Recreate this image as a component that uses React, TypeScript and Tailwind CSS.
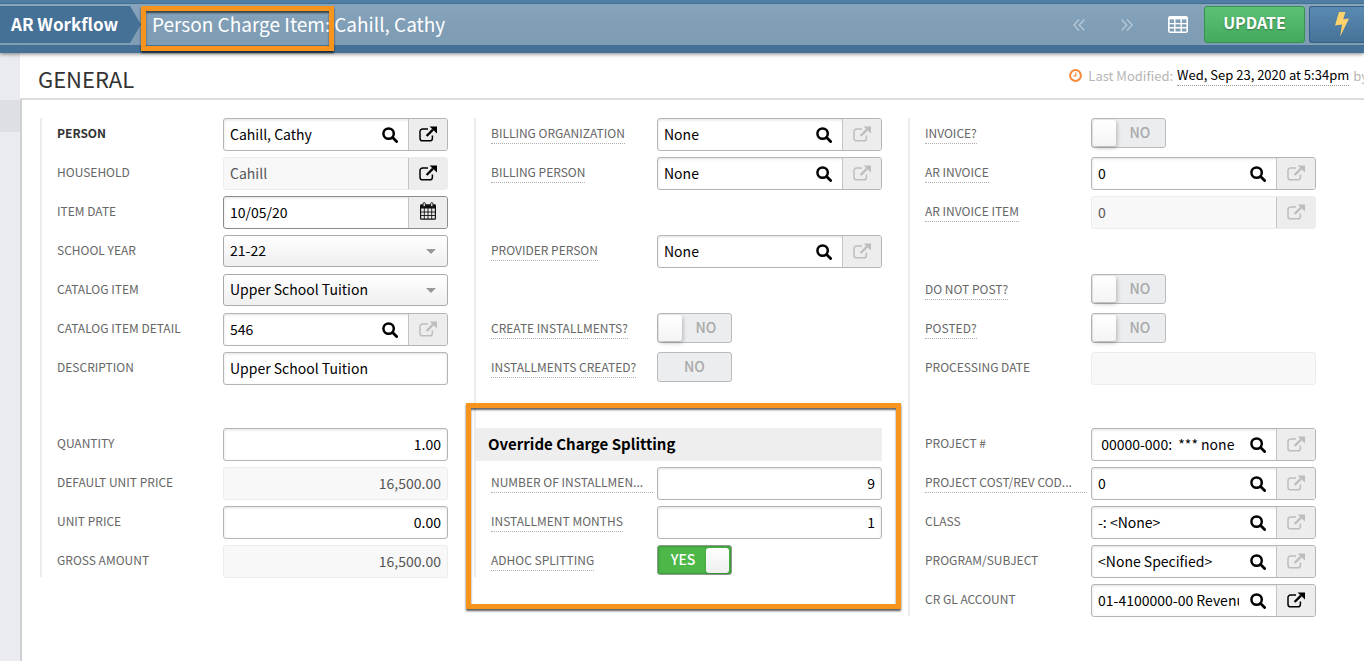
import React, { useState } from 'react';

type FieldKind = 'lookup' | 'linked' | 'date' | 'select' | 'text' | 'number' | 'toggle' | 'flag' | 'spacer' | 'gap';

interface Field {
  id: string;
  kind: FieldKind;
  label?: string;
  value?: string;
  bold?: boolean;
  hint?: boolean; // dotted underline, help text available
  clipped?: boolean; // shortened label, takes the full label column
  readOnly?: boolean;
  linkActive?: boolean;
  on?: boolean;
}

const itemFields: Field[] = [
  { id: 'person', kind: 'lookup', label: 'PERSON', value: 'Cahill, Cathy', bold: true, linkActive: true },
  { id: 'household', kind: 'linked', label: 'HOUSEHOLD', value: 'Cahill', readOnly: true, linkActive: true },
  { id: 'item-date', kind: 'date', label: 'ITEM DATE', value: '10/05/20' },
  { id: 'school-year', kind: 'select', label: 'SCHOOL YEAR', value: '21-22' },
  { id: 'catalog-item', kind: 'select', label: 'CATALOG ITEM', value: 'Upper School Tuition' },
  { id: 'catalog-detail', kind: 'lookup', label: 'CATALOG ITEM DETAIL', value: '546' },
  { id: 'description', kind: 'text', label: 'DESCRIPTION', value: 'Upper School Tuition' },
  { id: 'item-gap', kind: 'gap' },
  { id: 'quantity', kind: 'number', label: 'QUANTITY', value: '1.00' },
  { id: 'default-price', kind: 'number', label: 'DEFAULT UNIT PRICE', value: '16,500.00', readOnly: true },
  { id: 'unit-price', kind: 'number', label: 'UNIT PRICE', value: '0.00' },
  { id: 'gross', kind: 'number', label: 'GROSS AMOUNT', value: '16,500.00', readOnly: true },
];

const billingFields: Field[] = [
  { id: 'billing-org', kind: 'lookup', label: 'BILLING ORGANIZATION', value: 'None', hint: true },
  { id: 'billing-person', kind: 'lookup', label: 'BILLING PERSON', value: 'None', hint: true },
  { id: 'billing-spacer-1', kind: 'spacer' },
  { id: 'provider', kind: 'lookup', label: 'PROVIDER PERSON', value: 'None', hint: true },
  { id: 'billing-spacer-2', kind: 'spacer' },
  { id: 'create-inst', kind: 'toggle', label: 'CREATE INSTALLMENTS?', hint: true },
  { id: 'inst-created', kind: 'flag', label: 'INSTALLMENTS CREATED?', hint: true },
  { id: 'billing-gap', kind: 'gap' },
];

const splittingFields: Field[] = [
  { id: 'num-inst', kind: 'number', label: 'NUMBER OF INSTALLMEN...', value: '9', hint: true, clipped: true },
  { id: 'inst-months', kind: 'number', label: 'INSTALLMENT MONTHS', value: '1', hint: true },
  { id: 'adhoc', kind: 'toggle', label: 'ADHOC SPLITTING', on: true, hint: true },
];

const invoiceFields: Field[] = [
  { id: 'invoice', kind: 'toggle', label: 'INVOICE?', hint: true },
  { id: 'ar-invoice', kind: 'lookup', label: 'AR INVOICE', value: '0', hint: true },
  { id: 'ar-invoice-item', kind: 'linked', label: 'AR INVOICE ITEM', value: '0', hint: true, readOnly: true },
  { id: 'invoice-spacer', kind: 'spacer' },
  { id: 'do-not-post', kind: 'toggle', label: 'DO NOT POST?', hint: true },
  { id: 'posted', kind: 'toggle', label: 'POSTED?', hint: true },
  { id: 'processing-date', kind: 'text', label: 'PROCESSING DATE', value: '', readOnly: true },
  { id: 'invoice-gap', kind: 'gap' },
  { id: 'project', kind: 'lookup', label: 'PROJECT #', value: ' 00000-000:  *** none' },
  { id: 'cost-code', kind: 'lookup', label: 'PROJECT COST/REV COD...', value: '0', hint: true, clipped: true },
  { id: 'class', kind: 'lookup', label: 'CLASS', value: '-: <None>' },
  { id: 'program', kind: 'lookup', label: 'PROGRAM/SUBJECT', value: '<None Specified>' },
  { id: 'gl-account', kind: 'lookup', label: 'CR GL ACCOUNT', value: '01-4100000-00 Revenue', linkActive: true },
];

function SearchIcon() {
  return (
    <svg className="h-4 w-4" viewBox="0 0 16 16" fill="none" stroke="#000">
      <circle cx="6.6" cy="6.6" r="5.2" strokeWidth="2.5" />
      <path d="M10.6 10.6 14.6 14.6" strokeWidth="2.8" strokeLinecap="round" />
    </svg>
  );
}

function ExternalIcon() {
  return (
    <svg className="h-4 w-[18px]" viewBox="0 0 18 16" fill="none" stroke="currentColor">
      <path d="M9 3H3.6A2.6 2.6 0 0 0 1 5.6v6.6a2.6 2.6 0 0 0 2.6 2.6h7.2a2.6 2.6 0 0 0 2.6-2.6V9.6" strokeWidth="1.5" />
      <path d="M7.6 10 14 3.6" strokeWidth="2.3" />
      <path d="M10.6 0.4H18V7.6Z" fill="currentColor" stroke="none" />
    </svg>
  );
}

function CalendarIcon() {
  return (
    <svg className="h-[18px] w-4" viewBox="0 0 16 18" fill="none" stroke="#111">
      <rect x="0.6" y="3" width="14.8" height="14.2" rx="0.8" strokeWidth="1.2" />
      <path d="M0.6 2.6h14.8v4H0.6z" fill="#111" stroke="none" />
      <path d="M4.3 6v11M8 6v11M11.7 6v11M1 10h14M1 13.5h14" strokeWidth="0.9" />
      <rect x="3.1" y="0.6" width="2.2" height="4" rx="1" fill="#ececec" strokeWidth="0.9" />
      <rect x="10.7" y="0.6" width="2.2" height="4" rx="1" fill="#ececec" strokeWidth="0.9" />
    </svg>
  );
}

function Toggle({ field }: { field: Field }) {
  const [on, setOn] = useState(!!field.on);
  return (
    <label
      className={`relative flex h-[30px] w-[75px] items-center rounded-[3px] border text-sm leading-5 font-medium ${
        on
          ? 'border-[#8f9a8f] bg-[#4db748] text-white shadow-[inset_0_0_2px_1px_#3c9a3a]'
          : 'border-[#b9babb] bg-[#ecedef] text-[#a9a9a9]'
      }`}
    >
      <input
        id={field.id}
        type="checkbox"
        className="sr-only"
        checked={on}
        onChange={(e) => setOn(e.target.checked)}
      />
      {on ? (
        <>
          <span className="w-12 pb-0.5 pl-0.5 text-center">YES</span>
          <span className="h-[25px] w-[23px] rounded-[3px] bg-linear-to-b from-white to-[#efefef] shadow-sm" />
        </>
      ) : (
        <>
          <span className="ml-px h-[26px] w-[23px] rounded-[3px] bg-linear-to-b from-white to-[#f4f4f4] shadow-[1px_2px_4px_rgba(0,0,0,0.25)]" />
          <span className="w-12 pb-0.5 text-center">NO</span>
        </>
      )}
    </label>
  );
}

function Control({ field }: { field: Field }) {
  const [value, setValue] = useState(field.value ?? '');
  const { id, kind, readOnly } = field;

  if (kind === 'toggle') return <Toggle field={field} />;

  if (kind === 'flag') {
    return (
      <output
        id={id}
        className="flex h-[30px] w-[75px] items-center justify-center rounded-[3px] border border-[#b9babb] bg-[#ecedef] pb-0.5 text-sm leading-5 font-medium text-[#a9a9a9]"
      >
        NO
      </output>
    );
  }

  if (kind === 'select') {
    return (
      <div className="relative">
        <select
          id={id}
          defaultValue={value}
          className="h-8 w-full appearance-none rounded-[3px] border border-[#aaa] bg-linear-to-b from-white to-[#efefef] px-1.5 pb-0.5 text-sm leading-5 text-black"
        >
          <option>{value}</option>
        </select>
        <svg className="pointer-events-none absolute top-3.5 right-3 h-[5px] w-2.5" viewBox="0 0 10 5">
          <path d="M0 0h10L5 5z" fill="#999" />
        </svg>
      </div>
    );
  }

  const border = readOnly
    ? 'border-[#ececec] bg-[#f8f8f8]'
    : kind === 'date'
      ? 'border-[#8c8c8c] bg-white shadow-[inset_0_1px_3px_rgba(0,0,0,0.12)]'
      : 'border-[#b5b5b5] bg-white shadow-[inset_0_1px_3px_rgba(0,0,0,0.12)]';

  return (
    <div className={`flex h-[33px] overflow-hidden rounded-[3px] border ${border}`}>
      <input
        id={id}
        type="text"
        value={value}
        readOnly={readOnly}
        onChange={(e) => setValue(e.target.value)}
        className={`min-w-0 flex-1 bg-transparent pb-0.5 pl-1.5 text-sm leading-5 outline-none ${
          readOnly ? 'text-[#555]' : 'text-black'
        } ${kind === 'number' ? 'pr-1.5 text-right' : ''}`}
      />
      {kind === 'lookup' && (
        <button type="button" aria-label="Search" className="flex w-[37px] items-center justify-center">
          <SearchIcon />
        </button>
      )}
      {(kind === 'lookup' || kind === 'linked') && (
        <button
          type="button"
          aria-label="Open record"
          className={`flex w-[39px] items-center justify-center border-l border-[#c4c4c4] bg-[#ededed] pb-0.5 ${
            field.linkActive ? 'text-black' : 'text-[#bdbdbd]'
          }`}
        >
          <ExternalIcon />
        </button>
      )}
      {kind === 'date' && (
        <button
          type="button"
          aria-label="Pick date"
          className="flex w-[39px] items-center justify-center border-l border-[#c4c4c4] bg-[#ededed] pb-1"
        >
          <CalendarIcon />
        </button>
      )}
    </div>
  );
}

function FieldRow({ field }: { field: Field }) {
  if (field.kind === 'gap') return <div className="h-[37px]" />;
  if (field.kind === 'spacer') return <div className="h-[39px]" />;

  return (
    <div className="flex h-[39px] items-start pl-[15px] last:h-8">
      <div className="flex w-[166px] shrink-0 pt-[5px] pr-1">
        <label
          htmlFor={field.id}
          className={`text-xs leading-5 whitespace-nowrap ${
            field.bold ? 'font-bold text-[#333]' : 'text-[#666]'
          } ${field.hint ? 'border-b border-dotted border-[#b0b0b0]' : ''} ${field.clipped ? 'w-full' : ''}`}
        >
          {field.label}
        </label>
      </div>
      <div className="min-w-0 flex-1">
        <Control field={field} />
      </div>
    </div>
  );
}

function Column({ fields, children }: { fields: Field[]; children?: React.ReactNode }) {
  return (
    <div className="self-start border-l-2 border-[#ececec] pr-[26px]">
      {fields.map((field) => (
        <FieldRow key={field.id} field={field} />
      ))}
      {children}
    </div>
  );
}

const outline =
  'pointer-events-none absolute border-5 border-[#f7941d] shadow-[0_2px_2px_rgba(0,0,0,0.65),inset_0_2px_2px_rgba(0,0,0,0.6)]';

function Header() {
  return (
    <header className="relative z-10 border-t-3 border-b-8 border-t-[#4f7da3] border-b-[#467196] shadow-[0_1px_4px_rgba(0,0,0,0.5)]">
      <div className="flex h-[42px] items-center border-t border-[#44708f] bg-linear-to-b from-[#86a5bc] to-[#7f9db5] to-60%">
        <nav className="flex min-w-0 flex-1 items-center text-white">
          <a
            href="#workflow"
            className="flex h-[37px] w-[141px] shrink-0 items-center bg-[#467196] pb-0.5 pl-[11px] text-[17px] leading-6 font-bold whitespace-nowrap [clip-path:polygon(0_0,130px_0,100%_50%,130px_100%,0_100%)]"
          >
            AR Workflow
          </a>
          <h1 className="flex pb-0.5 pl-[11px] text-[19px] leading-7 whitespace-nowrap">
            <span className="relative pr-1">
              Person Charge Item:
              <span className={`${outline} -top-1 right-0 -bottom-[13px] -left-[11px]`} />
            </span>
            <span>Cahill, Cathy</span>
          </h1>
        </nav>
        <div className="flex items-center">
          <button type="button" aria-label="Previous" className="flex w-12 justify-center">
            <svg className="h-3 w-3" viewBox="0 0 12 12" fill="none" stroke="#b9cad8" strokeWidth="1.3">
              <path d="M6 0.5 0.8 6 6 11.5M11.4 0.5 6.2 6l5.2 5.5" />
            </svg>
          </button>
          <button type="button" aria-label="Next" className="flex w-12 justify-center">
            <svg className="h-3 w-3" viewBox="0 0 12 12" fill="none" stroke="#b9cad8" strokeWidth="1.3">
              <path d="M0.6 0.5 5.8 6 0.6 11.5M6 0.5 11.2 6 6 11.5" />
            </svg>
          </button>
          <button type="button" aria-label="Grid view" className="flex w-[53px] justify-center">
            <svg className="h-[17px] w-5" viewBox="0 0 20 17" fill="none" stroke="#fff">
              <rect x="0.8" y="0.8" width="18.4" height="15.4" rx="1.5" strokeWidth="1.6" />
              <path d="M1 2.2h18" strokeWidth="2.4" />
              <path d="M6.8 3v13M13.2 3v13M1 7.6h18M1 11.8h18" strokeWidth="1.4" />
            </svg>
          </button>
          <button
            type="button"
            className="h-[37px] w-[101px] rounded-[3px] border border-[#37924c] bg-linear-to-b from-[#5cc177] to-[#43ab5d] pb-1.5 text-base leading-6 font-bold text-white [text-shadow:0_1px_2px_rgba(0,0,0,0.35)]"
          >
            UPDATE
          </button>
          <button
            type="button"
            aria-label="Actions"
            className="ml-1 flex h-[37px] w-[55px] items-center rounded-l-[3px] border border-r-0 border-[#355f83] bg-linear-to-b from-[#5a8ab2] to-[#467298] pl-[25px]"
          >
            <svg className="h-[25px] w-3.5" viewBox="0 0 14 25">
              <path d="M4 0h6.4L8.2 7.2 14 6.6 5.2 24.6 7 12.6 0 13.6z" fill="#ffd36b" />
            </svg>
          </button>
        </div>
      </div>
    </header>
  );
}

export default function App() {
  return (
    <div className="flex min-h-screen flex-col overflow-x-hidden bg-white font-['Noto_Sans_CJK_JP',sans-serif]">
      <Header />
      <div className="flex flex-1">
        <aside className="w-5 shrink-0 bg-[#eaebf0] pt-[47px]">
          <div className="h-8 bg-[#dedfe4]" />
        </aside>
        <main className="flex min-w-0 flex-1 flex-col">
          <div className="flex h-[47px] items-center justify-between border-b-2 border-[#dcdcdc] pl-[18px]">
            <h2 className="pt-1 text-[22px] leading-7 text-[#333]">GENERAL</h2>
            <p className="-mr-1 flex items-center text-[13px] leading-5 whitespace-nowrap text-[#b5b5b5]">
              <svg className="mr-1.5 h-[13px] w-[13px]" viewBox="0 0 13 13" fill="none" stroke="#f68b3c">
                <circle cx="6.5" cy="6.5" r="5.4" strokeWidth="2" />
                <path d="M6.8 3.6v3.2H4.4" strokeWidth="1.2" />
              </svg>
              Last Modified:
              <span className="mx-1 border-b border-dotted border-[#999] text-black">Wed, Sep 23, 2020 at 5:34pm</span>
              by
            </p>
          </div>
          <form className="grid flex-1 grid-cols-3 border-l-2 border-[#cfd0d3] pt-[18px] pr-[22px] pl-[18px]">
            <Column fields={itemFields} />
            <Column fields={billingFields}>
              <section className="relative">
                <div className={`${outline} -top-[25px] -right-[19px] -bottom-8 -left-[10px]`} />
                <h3 className="mb-1.5 h-[33px] bg-[#eee] pl-3 text-[15px] leading-8 font-bold text-black">
                  Override Charge Splitting
                </h3>
                {splittingFields.map((field) => (
                  <FieldRow key={field.id} field={field} />
                ))}
              </section>
            </Column>
            <Column fields={invoiceFields} />
          </form>
        </main>
      </div>
    </div>
  );
}
